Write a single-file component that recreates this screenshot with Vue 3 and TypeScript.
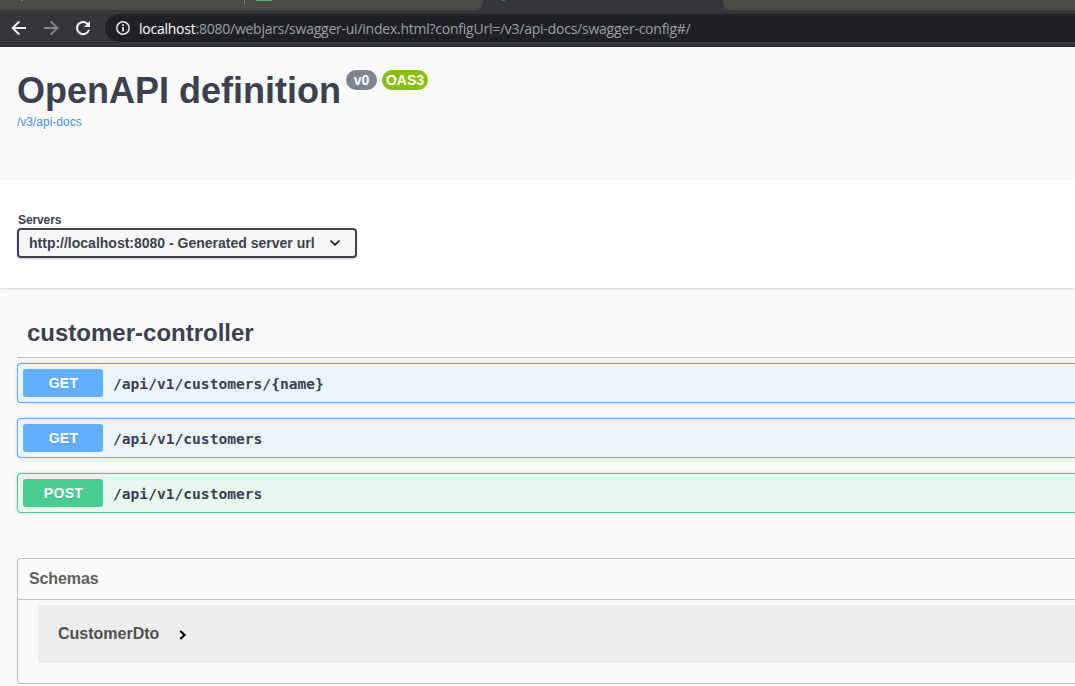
<script setup lang="ts">
interface Operation {
  method: 'GET' | 'POST'
  path: string
}

const operations: Operation[] = [
  { method: 'GET', path: '/api/v1/customers/{name}' },
  { method: 'GET', path: '/api/v1/customers' },
  { method: 'POST', path: '/api/v1/customers' },
]
</script>

<template>
  <div class="window">
    <header class="browser">
      <div class="tabs">
        <div class="tab-bg left">
          <i class="orange"></i>
          <i class="separator"></i>
          <i class="green"></i>
        </div>
        <div class="tab-active"><i class="leaf"></i></div>
        <div class="tab-bg right"></div>
      </div>
      <div class="toolbar">
        <svg class="nav" width="16" height="16" viewBox="0 0 16 16" fill="none" stroke="#f1f3f4" stroke-width="2">
          <path d="M15 8H2.4M8.3 1.4L1.7 8l6.6 6.6" />
        </svg>
        <svg class="nav" width="16" height="16" viewBox="0 0 16 16" fill="none" stroke="#85878a" stroke-width="2">
          <path d="M1 8h12.6M7.7 1.4L14.3 8l-6.6 6.6" />
        </svg>
        <svg class="nav" width="16" height="16" viewBox="0 0 16 16" fill="none" stroke="#f1f3f4" stroke-width="2">
          <path d="M13.3 4.8A6.1 6.1 0 1 0 14 9.7" />
          <path d="M15 1v6H9z" fill="#f1f3f4" stroke="none" />
        </svg>
        <div class="address">
          <svg width="14" height="14" viewBox="0 0 14 14" fill="none" stroke="#e8eaed">
            <circle cx="7" cy="7" r="6.2" stroke-width="1.5" />
            <path d="M7 6v4.5M7 3.3v1.6" stroke-width="1.7" />
          </svg>
          <span class="url"><b>localhost</b>:8080/webjars/swagger-ui/index.html?configUrl=/v3/api-docs/swagger-config#/</span>
        </div>
      </div>
    </header>

    <section class="info">
      <h1><span class="title">OpenAPI definition</span><span class="badge version">v0</span><span class="badge oas">OAS3</span></h1>
      <a class="docs">/v3/api-docs</a>
    </section>

    <section class="servers">
      <label>Servers</label>
      <div class="select">
        <span>http://localhost:8080 - Generated server url</span>
        <svg width="12" height="8" viewBox="0 0 12 8" fill="none" stroke="#111" stroke-width="1.7">
          <path d="M1.5 1.5L6 5.8l4.5-4.3" />
        </svg>
      </div>
    </section>

    <main>
      <h2><span>customer-controller</span></h2>
      <div v-for="(op, i) in operations" :key="i" class="operation" :class="op.method.toLowerCase()">
        <span class="method">{{ op.method }}</span>
        <span class="path">{{ op.path }}</span>
      </div>

      <section class="schemas">
        <h3>Schemas</h3>
        <div class="model">
          <span>CustomerDto</span>
          <svg width="8" height="10" viewBox="0 0 8 10" fill="none" stroke="#000" stroke-width="2">
            <path d="M1.3 1L5.6 5 1.3 9" />
          </svg>
        </div>
      </section>
    </main>
  </div>
</template>

<style>
body {
  margin: 0;
  overflow: hidden;
  background: #fafafa;
}
</style>

<style scoped>
.window {
  box-sizing: border-box;
  width: 1075px;
  height: 686px;
  overflow: hidden;
  background: #fafafa;
  color: #3b4151;
  font-family: "Liberation Sans", Arial, sans-serif;
}
.browser {
  height: 47px;
  box-sizing: border-box;
  background: #35363a;
  border-bottom: 1px solid #292a2d;
}
.tabs {
  display: flex;
  height: 10px;
}
.tab-bg {
  background: #4c4a46;
}
.left {
  display: flex;
  width: 483px;
  border-radius: 0 0 8px 0;
}
.tab-active {
  width: 240px;
}
.right {
  flex: 1;
  border-radius: 0 0 0 8px;
}
.orange {
  width: 2px;
  height: 1px;
  margin-left: 21px;
  background: #a56a43;
}
.separator {
  width: 1px;
  height: 4px;
  margin-left: 221px;
  background: #7c7b78;
}
.green {
  width: 16px;
  height: 1px;
  margin-left: 11px;
  background: #57b36c;
}
.leaf {
  display: block;
  width: 4px;
  height: 1px;
  margin-left: 18px;
  background: #26814a;
}
.toolbar {
  display: flex;
  align-items: center;
  height: 36px;
  padding-left: 11px;
}
.nav {
  flex: none;
  margin-right: 16px;
}
.address {
  display: flex;
  flex: 1;
  align-items: center;
  height: 28px;
  margin-left: -2px;
  padding-left: 11px;
  border-radius: 14px 0 0 14px;
  background: #202124;
}
.url {
  margin: 1px 0 0 9px;
  color: #9aa0a6;
  font: 14px/20px "Open Sans", "Noto Sans", sans-serif;
  letter-spacing: -0.24px;
  white-space: nowrap;
}
.url b {
  color: #fff;
  font-weight: 400;
}
.info {
  box-sizing: border-box;
  height: 133px;
  padding: 23px 17px 0;
}
h1 {
  display: flex;
  align-items: flex-start;
  height: 41px;
  margin: 0;
  font-size: 36px;
  line-height: 41px;
}
.title {
  width: 329px;
  white-space: nowrap;
}
.badge {
  box-sizing: border-box;
  height: 20px;
  border-radius: 10px;
  color: #fff;
  font-size: 14px;
  line-height: 20px;
  text-align: center;
}
.version {
  width: 31px;
  background: #7d8492;
}
.oas {
  width: 46px;
  margin-left: 5px;
  background: #89bf04;
}
.docs {
  display: block;
  margin-top: 4px;
  color: #4990e2;
  font-size: 12px;
  line-height: 14px;
}
.servers {
  box-sizing: border-box;
  height: 108px;
  margin-bottom: 1px;
  padding: 33px 17px 0;
  background: #fff;
  box-shadow: 0 1px 2px rgba(0, 0, 0, 0.15);
}
.servers label {
  display: block;
  height: 15px;
  margin-left: 1px;
  font-size: 12px;
  font-weight: 700;
  line-height: 14px;
  letter-spacing: -0.1px;
}
.select {
  box-sizing: border-box;
  display: flex;
  align-items: center;
  width: 340px;
  height: 30px;
  padding-left: 10px;
  border: 2px solid #41444e;
  border-radius: 4px;
  background: #f7f7f7;
  box-shadow: 0 1px 2px rgba(0, 0, 0, 0.25);
  font-size: 14px;
  font-weight: 700;
}
.select span {
  width: 300px;
  white-space: nowrap;
}
main {
  padding-left: 17px;
}
h2 {
  box-sizing: border-box;
  height: 69px;
  margin: 0 0 5px;
  padding: 30px 10px 0;
  border-bottom: 1px solid #bebfc3;
  font-size: 24px;
  line-height: 28px;
}
.operation {
  box-sizing: border-box;
  display: flex;
  align-items: center;
  height: 40px;
  margin-bottom: 15px;
  padding-left: 5px;
  border: 1px solid;
  border-right: 0;
  border-radius: 4px 0 0 4px;
  box-shadow: 0 0 3px rgba(0, 0, 0, 0.19);
}
.get {
  border-color: #61affe;
  background: #ebf3fb;
}
.post {
  border-color: #49cc90;
  background: #e8f6f0;
}
.method {
  box-sizing: border-box;
  width: 80px;
  height: 28px;
  padding-left: 1px;
  border-radius: 3px;
  color: #fff;
  font-size: 14px;
  font-weight: 700;
  line-height: 28px;
  letter-spacing: 0.3px;
  text-align: center;
  text-shadow: 0 1px 0 rgba(0, 0, 0, 0.1);
}
.get .method {
  background: #61affe;
}
.post .method {
  background: #49cc90;
}
.path {
  margin: 2px 0 0 10px;
  font: 700 14.6px/20px "DejaVu Sans Mono", monospace;
}
.schemas {
  box-sizing: border-box;
  height: 126px;
  margin-top: 45px;
  border: 1px solid #bebfc3;
  border-right: 0;
  border-radius: 4px 0 0 4px;
}
h3 {
  height: 40px;
  margin: 0 0 5px;
  padding-left: 11px;
  border-bottom: 1px solid #bebfc3;
  color: #606060;
  font-size: 16px;
  line-height: 39px;
  letter-spacing: -0.1px;
}
.model {
  display: flex;
  align-items: center;
  height: 58px;
  margin-left: 20px;
  padding-left: 20px;
  border-radius: 4px 0 0 4px;
  background: #ededed;
  color: #505050;
  font-size: 16px;
  font-weight: 700;
}
.model svg {
  margin: 2px 0 0 20px;
}
</style>
